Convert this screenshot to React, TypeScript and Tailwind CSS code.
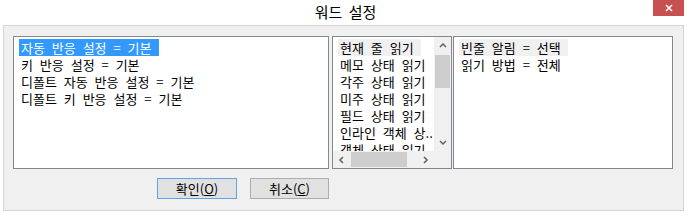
const leftItems = [
  "자동 반응 설정 = 기본",
  "키 반응 설정 = 기본",
  "디폴트 자동 반응 설정 = 기본",
  "디폴트 키 반응 설정 = 기본",
];

const midItems = [
  "현재 줄 읽기",
  "메모 상태 읽기",
  "각주 상태 읽기",
  "미주 상태 읽기",
  "필드 상태 읽기",
  "인라인 객체 상..",
  "객체 상태 읽기",
];

const rightItems = ["빈줄 알림 = 선택", "읽기 방법 = 전체"];

type Mark = "none" | "focus" | "soft";

const Row = ({ text, mark }: { text: string; mark: Mark }) => (
  <div className="h-[17px] whitespace-nowrap [word-spacing:4px]">
    <span
      className={
        mark === "focus"
          ? "inline-block h-[17px] pl-[2px] pr-[7px] leading-[17px] bg-[#3399ff] text-white"
          : mark === "soft"
          ? "inline-block h-[17px] pl-[2px] pr-[7px] leading-[17px] bg-[#f0f0f0]"
          : "inline-block h-[17px] pl-[2px] pr-[7px] leading-[17px]"
      }
    >
      {text}
    </span>
  </div>
);

const Chevron = ({ dir }: { dir: "up" | "down" | "left" | "right" }) => {
  const pts = {
    up: "1,5 4,2 7,5",
    down: "1,2 4,5 7,2",
    left: "5,1 2,4 5,7",
    right: "2,1 5,4 2,7",
  }[dir];
  const vertical = dir === "up" || dir === "down";
  return (
    <svg width={vertical ? 8 : 7} height={vertical ? 7 : 8} viewBox={vertical ? "0 0 8 7" : "0 0 7 8"}>
      <polyline points={pts} fill="none" stroke="#606060" strokeWidth="1.5" />
    </svg>
  );
};

export default function App() {
  return (
    <div className="w-[691px] h-[218px] bg-white flex flex-col overflow-hidden font-['Noto_Sans_CJK_KR','Noto_Sans',sans-serif] text-[13px] text-black">
      {/* Title bar */}
      <div className="relative h-[25px] flex items-center justify-center pb-[2px]">
        <span className="text-[15px] leading-[18px] [word-spacing:3px]">워드 설정</span>
        <div className="absolute right-[7px] top-0 w-[31px] h-[16px] bg-[#c75050] flex items-center justify-center">
          <svg width="8" height="8" viewBox="0 0 8 8">
            <path d="M1 1 L7 7 M7 1 L1 7" stroke="white" strokeWidth="1.6" />
          </svg>
        </div>
      </div>

      {/* Dialog body */}
      <div className="ml-[3px] w-[681px] h-[186px] border border-[#d5d5d5] bg-[#f0f0f0] pt-[10px] pl-[9px] flex flex-col">
        <div className="flex h-[133px]">
          <div className="w-[316px] h-full border border-[#828790] bg-white pt-[1px] pl-[5px]">
            {leftItems.map((t, i) => (
              <Row key={t} text={t} mark={i === 0 ? "focus" : "none"} />
            ))}
          </div>

          <div className="ml-[3px] w-[120px] h-full border border-[#828790] bg-white flex flex-col">
            <div className="flex flex-1 min-h-0">
              <div className="flex-1 overflow-hidden pt-[1px] pl-[5px]">
                {midItems.map((t, i) => (
                  <Row key={t} text={t} mark={i === 0 ? "soft" : "none"} />
                ))}
              </div>
              <div className="w-[17px] bg-[#f0f0f0] flex flex-col items-center">
                <div className="h-[17px] w-full flex items-center justify-center">
                  <Chevron dir="up" />
                </div>
                <div className="mt-[1px] w-[15px] h-[33px] bg-[#cdcdcd]" />
                <div className="flex-1" />
                <div className="h-[17px] w-full flex items-center justify-center">
                  <Chevron dir="down" />
                </div>
              </div>
            </div>
            <div className="h-[17px] flex bg-[#f0f0f0]">
              <div className="flex-1 flex items-center">
                <div className="w-[17px] h-full flex items-center justify-center">
                  <Chevron dir="left" />
                </div>
                <div className="flex-1 h-full flex items-center">
                  <div className="ml-[1px] w-[56px] h-[15px] bg-[#cdcdcd]" />
                </div>
                <div className="w-[17px] h-full flex items-center justify-center">
                  <Chevron dir="right" />
                </div>
              </div>
              <div className="w-[17px] h-full" />
            </div>
          </div>

          <div className="ml-[1px] w-[220px] h-full border border-[#828790] bg-white pt-[1px] pl-[5px]">
            {rightItems.map((t, i) => (
              <Row key={t} text={t} mark={i === 0 ? "soft" : "none"} />
            ))}
          </div>
        </div>

        <div className="mt-[9px] pl-[144px] flex gap-[13px]">
          <button className="w-[80px] h-[21px] border border-[#5ea5e8] bg-[#e1e1e1] flex items-center justify-center leading-[15px]">
            확인(<span className="underline">O</span>)
          </button>
          <button className="w-[79px] h-[21px] border border-[#adadad] bg-[#e1e1e1] flex items-center justify-center leading-[15px]">
            취소(<span className="underline">C</span>)
          </button>
        </div>
      </div>
    </div>
  );
}
